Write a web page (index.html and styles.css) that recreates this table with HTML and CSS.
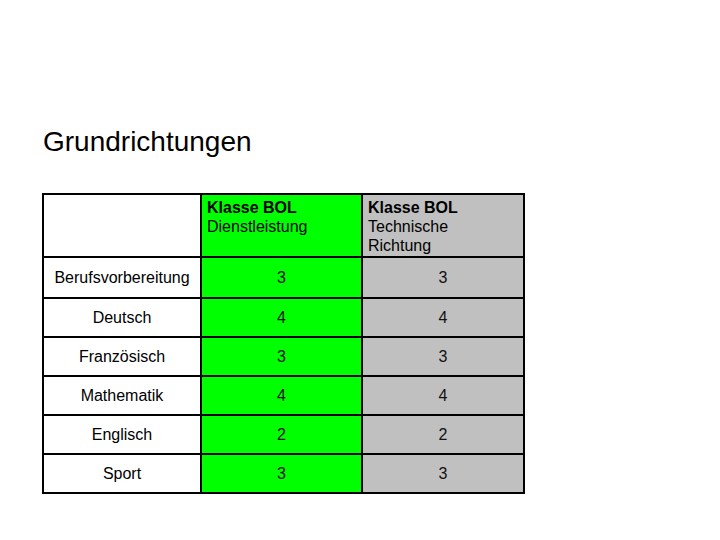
FILE: index.html
```html
<!DOCTYPE html>
<html lang="de">
<head>
<meta charset="utf-8">
<title>Grundrichtungen</title>
<link rel="stylesheet" href="styles.css">
</head>
<body>
<h1 class="title">Grundrichtungen</h1>
<table class="grid">
  <tr class="head">
    <td class="c1"></td>
    <td class="c2 green"><b>Klasse BOL</b><br>Dienstleistung</td>
    <td class="c3 grey"><b>Klasse BOL</b><br>Technische<br>Richtung</td>
  </tr>
  <tr class="r first">
    <td class="c1">Berufsvorbereitung</td>
    <td class="c2 green num">3</td>
    <td class="c3 grey num">3</td>
  </tr>
  <tr class="r">
    <td class="c1">Deutsch</td>
    <td class="c2 green num">4</td>
    <td class="c3 grey num">4</td>
  </tr>
  <tr class="r">
    <td class="c1">Französisch</td>
    <td class="c2 green num">3</td>
    <td class="c3 grey num">3</td>
  </tr>
  <tr class="r">
    <td class="c1">Mathematik</td>
    <td class="c2 green num">4</td>
    <td class="c3 grey num">4</td>
  </tr>
  <tr class="r">
    <td class="c1">Englisch</td>
    <td class="c2 green num">2</td>
    <td class="c3 grey num">2</td>
  </tr>
  <tr class="r">
    <td class="c1">Sport</td>
    <td class="c2 green num">3</td>
    <td class="c3 grey num">3</td>
  </tr>
</table>
</body>
</html>
```
FILE: styles.css
```css
html, body {
  margin: 0;
  padding: 0;
  background: #fff;
}
body {
  font-family: "Liberation Sans", Arial, sans-serif;
  color: #000;
}
.title {
  margin: 0;
  padding: 126px 0 0 43px;
  font-size: 28px;
  font-weight: normal;
  line-height: 32px;
  height: 35px;
}
.grid {
  margin: 32px 0 0 42px;
  border-collapse: separate;
  border-spacing: 0;
  border-top: 2px solid #000;
  border-left: 2px solid #000;
  font-size: 16px;
  line-height: 19px;
}
.grid td {
  box-sizing: border-box;
  border-right: 2px solid #000;
  border-bottom: 2px solid #000;
  padding: 0;
  text-align: center;
  vertical-align: middle;
}
.c1 { width: 158px; }
.c2 { width: 161px; }
.c3 { width: 162px; }
.green { background: #00ff00; }
.grey { background: #c0c0c0; }
.head td {
  height: 63px;
  text-align: left;
  vertical-align: top;
  padding: 3px 0 0 5px;
}
.head .c1 { padding: 0; }
.r td { height: 39px; }
.r.first td { height: 41px; }
.num { color: #111; }
```
